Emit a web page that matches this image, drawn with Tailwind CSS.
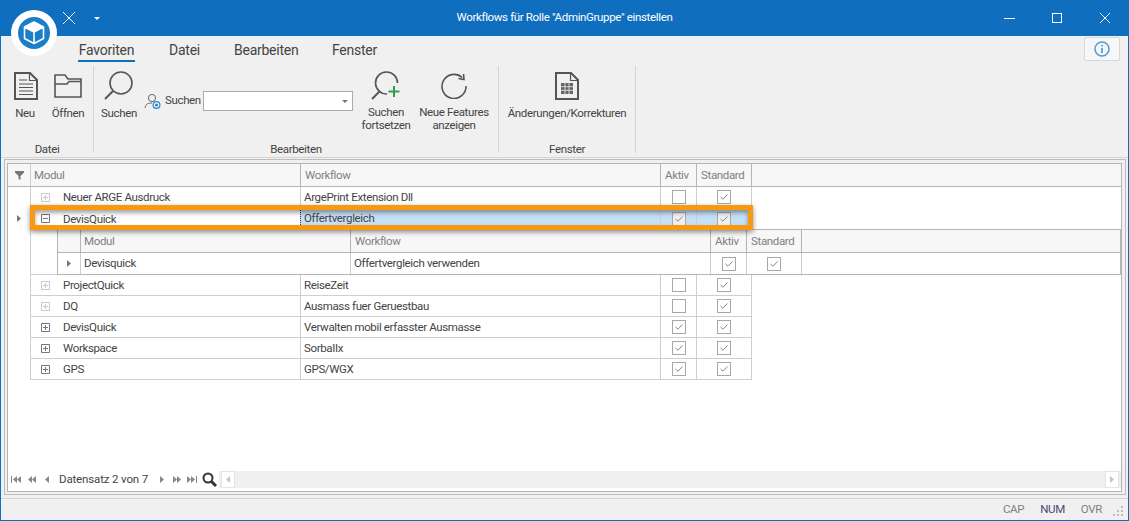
<!DOCTYPE html>
<html lang="de">
<head>
    <meta charset="UTF-8">
    <title>Workflows für Rolle</title>
    <script src="https://cdn.jsdelivr.net/npm/@tailwindcss/browser@4"></script>
</head>
<body class="relative w-[1129px] h-[521px] overflow-hidden flex flex-col bg-[#f0f0f0] border-x border-b border-[#106ebe] font-['Roboto',sans-serif] text-[11.5px] tracking-[-0.35px] text-[#444]">

    <!-- Title bar -->
    <div class="h-9 shrink-0 -mx-px bg-[#106ebe] flex items-center text-white relative">
        <svg class="ml-[63px] w-3 h-3" viewBox="0 0 12 12"><path d="M0 0L12 12M12 0L0 12" stroke="#fff" stroke-width="1" fill="none"/></svg>
        <svg class="ml-[19px] w-[6px] h-[3px]" viewBox="0 0 6 3"><path d="M0 0H6L3 3Z" fill="#fff"/></svg>
        <div class="absolute left-0 right-0 top-0 h-9 flex items-center justify-center">Workflows für Rolle "AdminGruppe" einstellen</div>
        <svg class="absolute left-[1004px] top-[18px] w-[11px] h-px" viewBox="0 0 11 1"><rect width="11" height="1" fill="#fff"/></svg>
        <div class="absolute left-[1052px] top-[13px] w-[10px] h-[10px] border border-white"></div>
        <svg class="absolute left-[1100px] top-[13px] w-[10px] h-[10px]" viewBox="0 0 10 10"><path d="M0 0L10 10M10 0L0 10" stroke="#fff" stroke-width="1" fill="none"/></svg>
    </div>

    <!-- App logo -->
    <svg class="absolute left-[10px] top-[10px] w-[46px] h-[46px]" viewBox="0 0 46 46">
        <circle cx="23" cy="23" r="23" fill="#fff"/>
        <circle cx="23" cy="23" r="16" fill="#1b7ec8"/>
        <path d="M23 12L32.5 17L23 22L13.5 17Z" fill="#fff"/>
        <path d="M23 12L32.5 17V28.5L23 33.5L13.5 28.5V17ZM13.5 17L23 22L32.5 17M23 22V33.5" fill="none" stroke="#fff" stroke-width="1.6" stroke-linejoin="round"/>
    </svg>

    <!-- Ribbon tabs -->
    <div class="h-[26px] shrink-0 flex items-start pl-[77px] text-[14px] tracking-[-0.25px] text-[#444]">
        <div class="h-[26px] pt-1 leading-5 border-b-[2px] border-[#106ebe] w-[57px] text-center">Favoriten</div>
        <div class="ml-[34px] pt-1 leading-5 w-[31px] text-center">Datei</div>
        <div class="ml-[34px] pt-1 leading-5 w-[63px] text-center">Bearbeiten</div>
        <div class="ml-[35px] pt-1 leading-5 w-[45px] text-center">Fenster</div>
    </div>

    <!-- Ribbon -->
    <div class="h-[96px] shrink-0 flex items-start pt-[4px] border-b border-[#d4d4d4]">
        <!-- Datei -->
        <div class="w-[93px] h-[87px] border-r border-[#d4d4d4] flex flex-col">
            <div class="flex-1 flex pl-[8px]">
                <div class="w-[32px] flex flex-col items-center">
                    <svg class="w-[24px] h-[28px] mt-[6px] ml-[2px]" viewBox="0 0 24 28" fill="none" stroke="#555">
                        <path d="M1 1H16L23 8V27H1Z" stroke-width="2"/><path d="M15.5 1.5V8.5H22.5" stroke-width="1.2"/>
                        <path d="M5 8H13M5 12H19M5 15.5H19M5 19H19M5 22.5H19" stroke-width="1.2"/>
                    </svg>
                    <span class="mt-[5px] leading-4">Neu</span>
                </div>
                <div class="ml-[5px] w-[44px] flex flex-col items-center">
                    <svg class="w-[28px] h-[24px] mt-[8px]" viewBox="0 0 28 24" fill="none" stroke="#555" stroke-width="1.6">
                        <path d="M1 23V1H11L14 5H27V23Z"/><path d="M1 10H13L15 7.5H27"/>
                    </svg>
                    <span class="mt-[7px] leading-4">Öffnen</span>
                </div>
            </div>
            <div class="h-4 -mb-1 text-center leading-4">Datei</div>
        </div>
        <!-- Bearbeiten -->
        <div class="w-[405px] h-[87px] border-r border-[#d4d4d4] flex flex-col">
            <div class="flex-1 flex">
                <div class="ml-[6px] w-[38px] flex flex-col items-center">
                    <svg class="w-[30px] h-[30px] mt-[5px]" viewBox="0 0 30 30" fill="none" stroke="#555">
                        <circle cx="17" cy="12" r="11" stroke-width="1.6"/><path d="M9 20L1 28" stroke-width="2"/>
                    </svg>
                    <span class="mt-[4px] leading-4">Suchen</span>
                </div>
                <div class="ml-[6px] mt-[25px] h-[20px] flex items-center">
                    <svg class="w-[17px] h-[17px]" viewBox="0 0 17 17" fill="none">
                        <circle cx="8" cy="5" r="3.6" stroke="#666"/><path d="M1 15C1.5 11 4 10 8 10" stroke="#666"/>
                        <circle cx="12.5" cy="12" r="3.4" stroke="#2a86d0" stroke-width="1.2"/><circle cx="12.5" cy="12" r="1.5" fill="#2a86d0"/>
                    </svg>
                    <span class="ml-[4px] w-[34px]">Suchen</span>
                    <div class="relative ml-[4px] w-[150px] h-[20px] bg-white border border-[#ababab]">
                        <svg class="absolute right-[4px] top-[8px] w-[6px] h-[3px]" viewBox="0 0 6 3"><path d="M0 0H6L3 3Z" fill="#777"/></svg>
                    </div>
                </div>
                <div class="ml-[8px] w-[50px] flex flex-col items-center">
                    <svg class="w-[30px] h-[30px] mt-[5px]" viewBox="0 0 30 30" fill="none" stroke="#555">
                        <path d="M26.5 12A11 11 0 1 0 16 23" stroke-width="1.6"/><path d="M9 20L1 28" stroke-width="2"/>
                        <path d="M23 15V26M17.5 20.5H28.5" stroke="#2f9e4f" stroke-width="2"/>
                    </svg>
                    <span class="mt-[5px] leading-[13px] text-center">Suchen fortsetzen</span>
                </div>
                <div class="ml-[4px] w-[78px] flex flex-col items-center">
                    <svg class="w-[26px] h-[26px] mt-[7px]" viewBox="0 0 26 26" fill="none" stroke="#555" stroke-width="1.6">
                        <path d="M21 4.5A12 12 0 1 0 25 13"/><path d="M17.5 5.5L23 6.5L22.5 1" stroke-width="1.6"/>
                    </svg>
                    <span class="mt-[7px] leading-[13px] text-center">Neue Features anzeigen</span>
                </div>
            </div>
            <div class="h-4 -mb-1 text-center leading-4">Bearbeiten</div>
        </div>
        <!-- Fenster -->
        <div class="w-[137px] h-[87px] border-r border-[#d4d4d4] flex flex-col">
            <div class="flex-1 flex flex-col items-center">
                <svg class="w-[24px] h-[28px] mt-[6px]" viewBox="0 0 24 28" fill="none" stroke="#555">
                    <path d="M1 1H16L23 8V27H1Z" stroke-width="2"/><path d="M15.5 1.5V8.5H22.5" stroke-width="1.2"/>
                    <path d="M6 11H18V22H6Z" fill="#666" stroke="none"/><path d="M6 14.7H18M6 18.3H18M10 11V22M14 11V22" stroke="#f0f0f0" stroke-width="0.8"/>
                </svg>
                <span class="mt-[5px] leading-4">Änderungen/Korrekturen</span>
            </div>
            <div class="h-4 -mb-1 text-center leading-4">Fenster</div>
        </div>
    </div>

    <!-- Info button -->
    <div class="absolute left-[1083px] top-[37px] w-[36px] h-[24px] bg-[#f7f7f7] border border-[#d8d8d8] rounded-[2px] flex items-center justify-center">
        <svg class="w-4 h-4" viewBox="0 0 16 16" fill="none"><circle cx="8" cy="8" r="7" stroke="#4a9fdc" stroke-width="1.5"/><path d="M8 7V12M8 4V5.6" stroke="#4a9fdc" stroke-width="1.8"/></svg>
    </div>

    <!-- Grid -->
    <div class="mt-[1px] ml-[3px] mr-[2px] flex-1 min-h-0 border border-[#bdbdbd] pt-[3px] pl-[2px] pr-[3px] pb-[2px] bg-[#f0f0f0]">
        <div class="h-full bg-white border border-[#b4b4b4] flex flex-col text-[#444]">
            <div class="flex-1">
                <!-- Header -->
                <div class="grid grid-cols-[22px_270px_360px_36px_56px] h-[23px] bg-[#f7f7f7] border-b border-[#b4b4b4] items-center text-[#808080]">
                    <div class="h-[15px] flex items-center justify-center"><svg class="w-[9px] h-[9px]" viewBox="0 0 9 9"><path d="M0 0H9V1.5L5.5 5V9L3.5 8V5L0 1.5Z" fill="#777"/></svg></div>
                    <div class="h-[22px] border-l border-[#cfcfcf] pl-[3px] leading-[22px]">Modul</div>
                    <div class="h-[22px] border-l border-[#b4b4b4] pl-[4px] leading-[22px]">Workflow</div>
                    <div class="h-[22px] border-l border-[#b4b4b4] pl-[4px] leading-[22px]">Aktiv</div>
                    <div class="h-[22px] border-x border-[#b4b4b4] pl-[4px] leading-[22px]">Standard</div>
                </div>
                <!-- Row 1 -->
                <div class="grid grid-cols-[22px_270px_360px_36px_56px] h-[21px] leading-5">
                    <div></div>
                    <div class="flex items-center border-l border-b border-[#cfcfcf] pl-[10px]"><svg class="w-[9px] h-[9px] mr-[13px]" viewBox="0 0 9 9" fill="none"><path d="M.5.5H8.5V8.5H.5ZM2 4.5H7M4.5 2V7" stroke="#c9c9c9"/></svg>Neuer ARGE Ausdruck</div>
                    <div class="border-l border-b border-[#cfcfcf] pl-[3px]">ArgePrint Extension Dll</div>
                    <div class="border-l border-b border-[#cfcfcf] flex items-center justify-center"><div class="w-[14px] h-[14px] border border-[#a8a8a8] bg-white"></div></div>
                    <div class="border-x border-b border-[#cfcfcf] flex items-center justify-center"><div class="w-[14px] h-[14px] border border-[#a8a8a8] bg-white flex items-center justify-center"><svg class="w-[8px] h-[6px]" viewBox="0 0 8 6" fill="none"><path d="M.5 3L3 5.2L7.5.5" stroke="#888"/></svg></div></div>
                </div>
                <!-- Row 2, selected -->
                <div class="grid grid-cols-[22px_270px_360px_36px_56px] h-[21px] leading-5">
                    <div class="flex items-center justify-center"><svg class="w-[4px] h-[7px]" viewBox="0 0 4 7"><path d="M0 0L4 3.5L0 7Z" fill="#777"/></svg></div>
                    <div class="flex items-center border-l border-[#cfcfcf] pl-[10px]"><svg class="w-[9px] h-[9px] mr-[13px]" viewBox="0 0 9 9" fill="none"><path d="M.5.5H8.5V8.5H.5ZM2 4.5H7" stroke="#777"/></svg>DevisQuick</div>
                    <div class="bg-[#c5dff5] pl-[3px] border-l border-dotted border-[#333]">Offertvergleich</div>
                    <div class="bg-[#c5dff5] border-l border-[#cfcfcf] flex items-center justify-center"><div class="w-[14px] h-[14px] border border-[#a8a8a8] bg-[#f0f0f0] flex items-center justify-center"><svg class="w-[8px] h-[6px]" viewBox="0 0 8 6" fill="none"><path d="M.5 3L3 5.2L7.5.5" stroke="#888"/></svg></div></div>
                    <div class="bg-[#c5dff5] border-x border-[#cfcfcf] flex items-center justify-center"><div class="w-[14px] h-[14px] border border-[#a8a8a8] bg-[#f0f0f0] flex items-center justify-center"><svg class="w-[8px] h-[6px]" viewBox="0 0 8 6" fill="none"><path d="M.5 3L3 5.2L7.5.5" stroke="#888"/></svg></div></div>
                </div>
                <!-- Detail grid -->
                <div class="ml-[22px] flex h-[46px] border-l border-[#cfcfcf]">
                    <div class="w-[26px] shrink-0 border-b border-[#cfcfcf]"></div>
                    <div class="flex-1 flex flex-col border border-[#b4b4b4]">
                        <div class="grid grid-cols-[22px_270px_360px_36px_56px] h-[23px] shrink-0 bg-[#f7f7f7] border-b border-[#b4b4b4] text-[#808080] leading-[22px]">
                            <div></div>
                            <div class="border-l border-[#b4b4b4] pl-[3px]">Modul</div>
                            <div class="border-l border-[#b4b4b4] pl-[4px]">Workflow</div>
                            <div class="border-l border-[#b4b4b4] pl-[4px]">Aktiv</div>
                            <div class="border-x border-[#b4b4b4] pl-[4px]">Standard</div>
                        </div>
                        <div class="grid grid-cols-[22px_270px_360px_36px_56px] flex-1 leading-5">
                            <div class="flex items-center justify-center"><svg class="w-[4px] h-[7px]" viewBox="0 0 4 7"><path d="M0 0L4 3.5L0 7Z" fill="#777"/></svg></div>
                            <div class="border-l border-[#cfcfcf] pl-[3px]">Devisquick</div>
                            <div class="border-l border-[#cfcfcf] pl-[3px]">Offertvergleich verwenden</div>
                            <div class="border-l border-[#cfcfcf] flex items-center justify-center"><div class="w-[14px] h-[14px] border border-[#a8a8a8] bg-white flex items-center justify-center"><svg class="w-[8px] h-[6px]" viewBox="0 0 8 6" fill="none"><path d="M.5 3L3 5.2L7.5.5" stroke="#888"/></svg></div></div>
                            <div class="border-x border-[#cfcfcf] flex items-center justify-center"><div class="w-[14px] h-[14px] border border-[#a8a8a8] bg-white flex items-center justify-center"><svg class="w-[8px] h-[6px]" viewBox="0 0 8 6" fill="none"><path d="M.5 3L3 5.2L7.5.5" stroke="#888"/></svg></div></div>
                        </div>
                    </div>
                </div>
                <!-- Rows 3-7 -->
                <div class="grid grid-cols-[22px_270px_360px_36px_56px] h-[21px] leading-5">
                    <div></div>
                    <div class="flex items-center border-l border-b border-[#cfcfcf] pl-[10px]"><svg class="w-[9px] h-[9px] mr-[13px]" viewBox="0 0 9 9" fill="none"><path d="M.5.5H8.5V8.5H.5ZM2 4.5H7M4.5 2V7" stroke="#c9c9c9"/></svg>ProjectQuick</div>
                    <div class="border-l border-b border-[#cfcfcf] pl-[3px]">ReiseZeit</div>
                    <div class="border-l border-b border-[#cfcfcf] flex items-center justify-center"><div class="w-[14px] h-[14px] border border-[#a8a8a8] bg-white"></div></div>
                    <div class="border-x border-b border-[#cfcfcf] flex items-center justify-center"><div class="w-[14px] h-[14px] border border-[#a8a8a8] bg-white flex items-center justify-center"><svg class="w-[8px] h-[6px]" viewBox="0 0 8 6" fill="none"><path d="M.5 3L3 5.2L7.5.5" stroke="#888"/></svg></div></div>
                </div>
                <div class="grid grid-cols-[22px_270px_360px_36px_56px] h-[21px] leading-5">
                    <div></div>
                    <div class="flex items-center border-l border-b border-[#cfcfcf] pl-[10px]"><svg class="w-[9px] h-[9px] mr-[13px]" viewBox="0 0 9 9" fill="none"><path d="M.5.5H8.5V8.5H.5ZM2 4.5H7M4.5 2V7" stroke="#c9c9c9"/></svg>DQ</div>
                    <div class="border-l border-b border-[#cfcfcf] pl-[3px]">Ausmass fuer Geruestbau</div>
                    <div class="border-l border-b border-[#cfcfcf] flex items-center justify-center"><div class="w-[14px] h-[14px] border border-[#a8a8a8] bg-white"></div></div>
                    <div class="border-x border-b border-[#cfcfcf] flex items-center justify-center"><div class="w-[14px] h-[14px] border border-[#a8a8a8] bg-white flex items-center justify-center"><svg class="w-[8px] h-[6px]" viewBox="0 0 8 6" fill="none"><path d="M.5 3L3 5.2L7.5.5" stroke="#888"/></svg></div></div>
                </div>
                <div class="grid grid-cols-[22px_270px_360px_36px_56px] h-[21px] leading-5">
                    <div></div>
                    <div class="flex items-center border-l border-b border-[#cfcfcf] pl-[10px]"><svg class="w-[9px] h-[9px] mr-[13px]" viewBox="0 0 9 9" fill="none"><path d="M.5.5H8.5V8.5H.5ZM2 4.5H7M4.5 2V7" stroke="#777"/></svg>DevisQuick</div>
                    <div class="border-l border-b border-[#cfcfcf] pl-[3px]">Verwalten mobil erfasster Ausmasse</div>
                    <div class="border-l border-b border-[#cfcfcf] flex items-center justify-center"><div class="w-[14px] h-[14px] border border-[#a8a8a8] bg-white flex items-center justify-center"><svg class="w-[8px] h-[6px]" viewBox="0 0 8 6" fill="none"><path d="M.5 3L3 5.2L7.5.5" stroke="#888"/></svg></div></div>
                    <div class="border-x border-b border-[#cfcfcf] flex items-center justify-center"><div class="w-[14px] h-[14px] border border-[#a8a8a8] bg-white flex items-center justify-center"><svg class="w-[8px] h-[6px]" viewBox="0 0 8 6" fill="none"><path d="M.5 3L3 5.2L7.5.5" stroke="#888"/></svg></div></div>
                </div>
                <div class="grid grid-cols-[22px_270px_360px_36px_56px] h-[21px] leading-5">
                    <div></div>
                    <div class="flex items-center border-l border-b border-[#cfcfcf] pl-[10px]"><svg class="w-[9px] h-[9px] mr-[13px]" viewBox="0 0 9 9" fill="none"><path d="M.5.5H8.5V8.5H.5ZM2 4.5H7M4.5 2V7" stroke="#777"/></svg>Workspace</div>
                    <div class="border-l border-b border-[#cfcfcf] pl-[3px]">SorbaIIx</div>
                    <div class="border-l border-b border-[#cfcfcf] flex items-center justify-center"><div class="w-[14px] h-[14px] border border-[#a8a8a8] bg-white flex items-center justify-center"><svg class="w-[8px] h-[6px]" viewBox="0 0 8 6" fill="none"><path d="M.5 3L3 5.2L7.5.5" stroke="#888"/></svg></div></div>
                    <div class="border-x border-b border-[#cfcfcf] flex items-center justify-center"><div class="w-[14px] h-[14px] border border-[#a8a8a8] bg-white flex items-center justify-center"><svg class="w-[8px] h-[6px]" viewBox="0 0 8 6" fill="none"><path d="M.5 3L3 5.2L7.5.5" stroke="#888"/></svg></div></div>
                </div>
                <div class="grid grid-cols-[22px_270px_360px_36px_56px] h-[21px] leading-5">
                    <div></div>
                    <div class="flex items-center border-l border-b border-[#cfcfcf] pl-[10px]"><svg class="w-[9px] h-[9px] mr-[13px]" viewBox="0 0 9 9" fill="none"><path d="M.5.5H8.5V8.5H.5ZM2 4.5H7M4.5 2V7" stroke="#777"/></svg>GPS</div>
                    <div class="border-l border-b border-[#cfcfcf] pl-[3px]">GPS/WGX</div>
                    <div class="border-l border-b border-[#cfcfcf] flex items-center justify-center"><div class="w-[14px] h-[14px] border border-[#a8a8a8] bg-white flex items-center justify-center"><svg class="w-[8px] h-[6px]" viewBox="0 0 8 6" fill="none"><path d="M.5 3L3 5.2L7.5.5" stroke="#888"/></svg></div></div>
                    <div class="border-x border-b border-[#cfcfcf] flex items-center justify-center"><div class="w-[14px] h-[14px] border border-[#a8a8a8] bg-white flex items-center justify-center"><svg class="w-[8px] h-[6px]" viewBox="0 0 8 6" fill="none"><path d="M.5 3L3 5.2L7.5.5" stroke="#888"/></svg></div></div>
                </div>
            </div>
            <!-- Navigator + scrollbar -->
            <div class="h-[17px] shrink-0 flex items-center pl-[3px] mb-[3px]">
                <svg class="w-[38px] h-[7px]" viewBox="0 0 38 7" fill="#888"><path d="M0 0H1V7H0ZM6 0V7L2 3.5ZM10 0V7L6 3.5ZM21 0V7L17 3.5ZM25 0V7L21 3.5ZM38 0V7L34 3.5Z"/></svg>
                <span class="ml-[10px] w-[101px] tracking-[-0.15px]">Datensatz 2 von 7</span>
                <svg class="w-[37px] h-[7px]" viewBox="0 0 37 7" fill="#888"><path d="M0 0L4 3.5L0 7ZM13 0L17 3.5L13 7ZM17 0L21 3.5L17 7ZM27 0L31 3.5L27 7ZM31 0L35 3.5L31 7ZM36 0H37V7H36Z"/></svg>
                <svg class="w-[15px] h-[15px] ml-[5px]" viewBox="0 0 15 15" fill="none" stroke="#333"><circle cx="6" cy="6" r="4.5" stroke-width="2"/><path d="M9.5 9.5L14 14" stroke-width="3"/></svg>
                <div class="ml-[2px] flex-1 h-[17px] bg-[#f0f0f0] flex justify-between pl-[2px] pr-[2px]">
                    <div class="w-[14px] h-[17px] bg-white border border-[#e4e4e4] flex items-center justify-center"><svg class="w-[4px] h-[7px]" viewBox="0 0 4 7"><path d="M4 0L0 3.5L4 7Z" fill="#c4c4c4"/></svg></div>
                    <div class="w-[14px] h-[17px] bg-white border border-[#e4e4e4] flex items-center justify-center"><svg class="w-[4px] h-[7px]" viewBox="0 0 4 7"><path d="M0 0L4 3.5L0 7Z" fill="#c4c4c4"/></svg></div>
                </div>
            </div>
        </div>
    </div>

    <!-- Status bar -->
    <div class="relative mt-[3px] h-[22px] shrink-0 border-t border-[#d4d4d4] flex items-center justify-end pr-[26px] gap-[16px] text-[#808080]">
        <span>CAP</span><span class="text-[#4a4a70]">NUM</span><span>OVR</span>
        <svg class="absolute right-[4px] bottom-[3px] w-[11px] h-[11px]" viewBox="0 0 11 11" fill="#bdbdbd"><path d="M8 0h2v2H8zM4 4h2v2H4zM8 4h2v2H8zM0 8h2v2H0zM4 8h2v2H4zM8 8h2v2H8z"/></svg>
    </div>

    <!-- Orange highlight around selected row -->
    <div class="absolute left-[29px] top-[205px] w-[723px] h-[25px] border-[5px] border-[#f79a12] shadow-[0_2px_5px_rgba(0,0,0,0.45),inset_0_3px_4px_rgba(0,0,0,0.35)]"></div>
</body>
</html>
